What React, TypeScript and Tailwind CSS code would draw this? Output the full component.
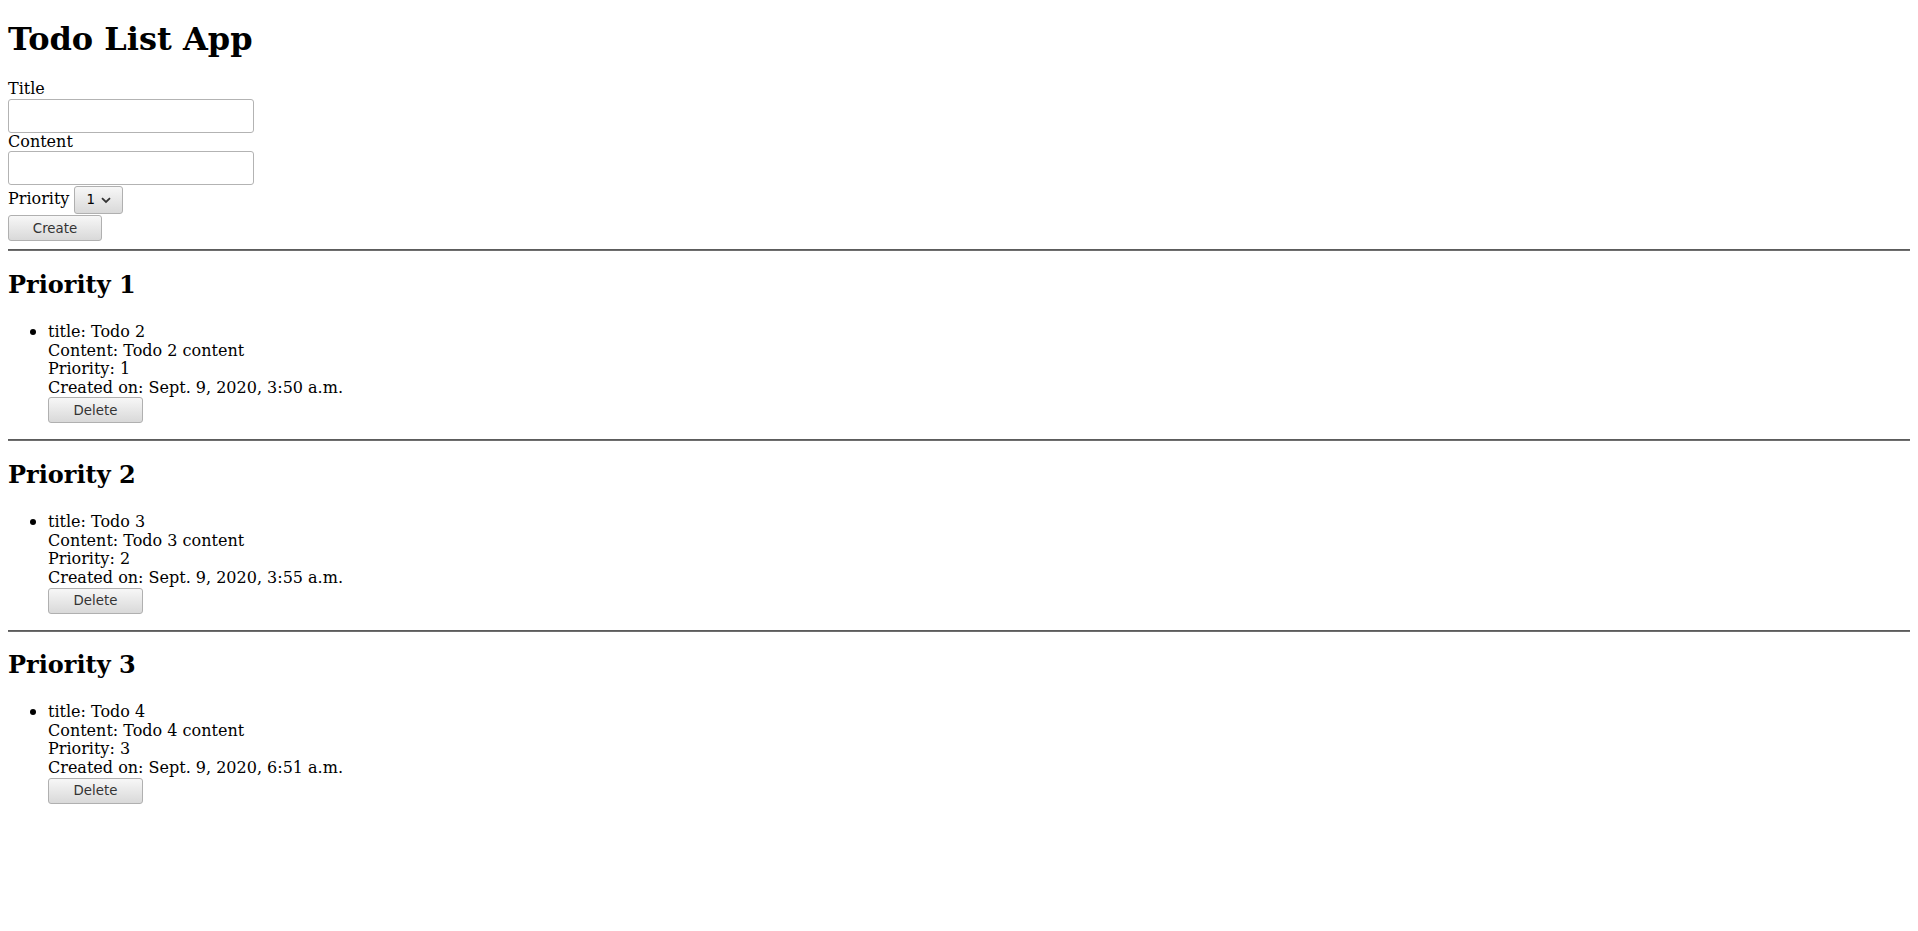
import React from 'react';

interface Todo {
  title: string;
  content: string;
  priority: number;
  created: string;
}

const todos: Todo[] = [
  { title: 'Todo 2', content: 'Todo 2 content', priority: 1, created: 'Sept. 9, 2020, 3:50 a.m.' },
  { title: 'Todo 3', content: 'Todo 3 content', priority: 2, created: 'Sept. 9, 2020, 3:55 a.m.' },
  { title: 'Todo 4', content: 'Todo 4 content', priority: 3, created: 'Sept. 9, 2020, 6:51 a.m.' },
];

const btn =
  "block rounded-[3px] border border-[#b0b0b0] bg-gradient-to-b from-[#f7f7f7] to-[#d9d9d9] font-['DejaVu_Sans',sans-serif] text-[13.333px] text-[#333] leading-none";

const Rule = () => (
  <hr className="my-2 h-0 border-t border-b border-t-[#5c5c5c] border-b-[#6e6e6e]" />
);

const App: React.FC = () => {
  return (
    <div className="min-h-screen bg-white px-2 pt-[21.44px] font-['DejaVu_Serif',serif] text-[16px] leading-[18.6px] text-black">
      <h1 className="mb-[21.44px] text-[32px] leading-[37.25px] font-bold">Todo List App</h1>

      <form onSubmit={(e) => e.preventDefault()}>
        <label htmlFor="title" className="block">Title</label>
        <input
          id="title"
          type="text"
          className="block h-[34px] w-[246px] rounded-[3px] border border-[#b3b3b3] bg-white px-1"
        />
        <label htmlFor="content" className="block">Content</label>
        <input
          id="content"
          type="text"
          className="block h-[34px] w-[246px] rounded-[3px] border border-[#b3b3b3] bg-white px-1"
        />
        <div className="flex h-[30px] items-start gap-[5px] pt-[0.6px]">
          <label htmlFor="priority" className="mt-[4px]">Priority</label>
          <div className="relative h-[28px] w-[49px]">
            <select
              id="priority"
              defaultValue="1"
              className="h-full w-full appearance-none rounded-[3px] border border-[#b0b0b0] bg-gradient-to-b from-[#f7f7f7] to-[#d9d9d9] pl-[11px] font-['DejaVu_Sans',sans-serif] text-[13.333px] text-black"
            >
              <option value="1">1</option>
              <option value="2">2</option>
              <option value="3">3</option>
            </select>
            <svg
              className="pointer-events-none absolute left-[27px] top-[11px]"
              width="10"
              height="7"
              viewBox="0 0 10 7"
            >
              <path d="M1 1.2 L5 5 L9 1.2" fill="none" stroke="#333" strokeWidth="1.8" />
            </svg>
          </div>
        </div>
        <button type="submit" className={`${btn} h-[26px] w-[94px]`}>
          Create
        </button>
      </form>

      {todos.map((t) => (
        <section key={t.title}>
          <Rule />
          <h2 className="my-[19.92px] text-[24px] leading-[27.9px] font-bold">Priority {t.priority}</h2>
          <ul className="my-4 list-disc pl-10 pt-[3px]">
            <li className="marker:text-[18px]">
              <div className="text-[16px]">title: {t.title}</div>
              <div>Content: {t.content}</div>
              <div>Priority: {t.priority}</div>
              <div>Created on: {t.created}</div>
              <button type="button" className={`${btn} h-[26px] w-[95px]`}>
                Delete
              </button>
            </li>
          </ul>
        </section>
      ))}
    </div>
  );
};

export default App;
